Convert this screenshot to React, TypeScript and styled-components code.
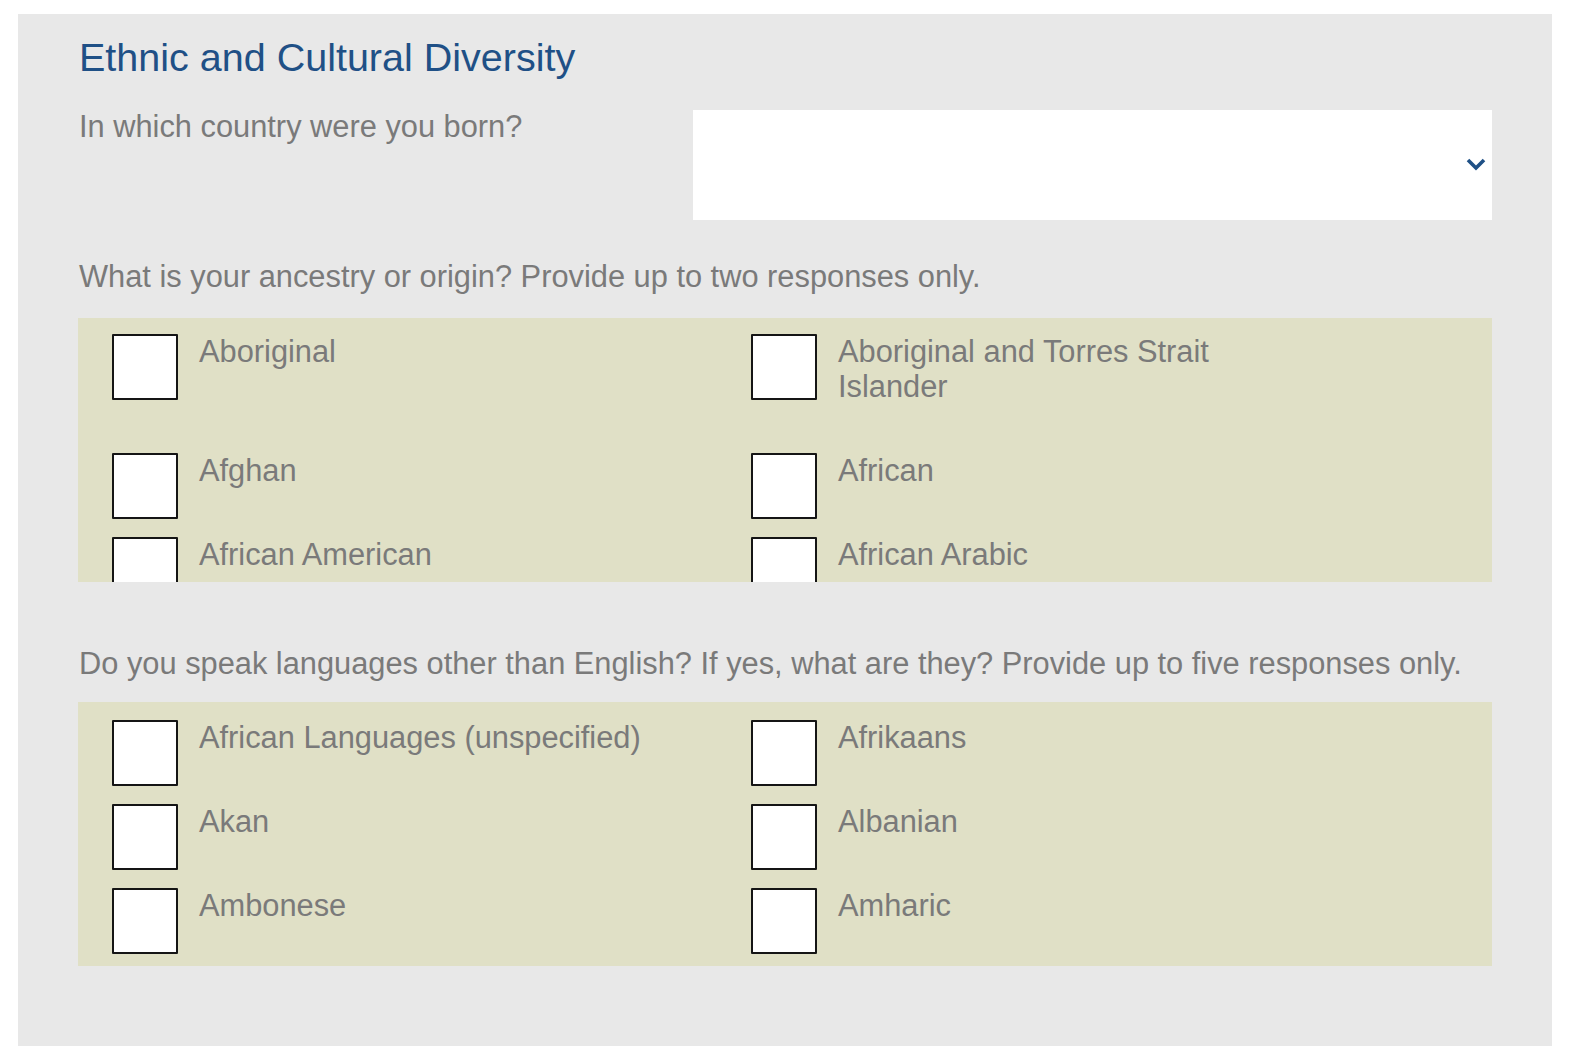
import React from "react";
import styled, { createGlobalStyle } from "styled-components";

const GlobalStyle = createGlobalStyle`
  html, body {
    margin: 0;
    padding: 0;
    background: #ffffff;
  }
  body {
    font-family: "Liberation Sans", Arial, Helvetica, sans-serif;
  }
  * { box-sizing: border-box; }
`;

const Page = styled.div`
  padding: 14px 18px 14px 18px;
`;

const Panel = styled.section`
  background: #e8e8e8;
  padding: 20px 60px 80px 60px;
  color: #7a7a7a;
  font-size: 30.8px;
  line-height: 34px;
`;

const Title = styled.h2`
  margin: 0 0 30px 1px;
  font-size: 39.5px;
  line-height: 46px;
  font-weight: 400;
  color: #1f5086;
`;

const QuestionRow = styled.div`
  display: grid;
  grid-template-columns: 615px 1fr;
  align-items: start;
`;

const Question = styled.p<{ $top: number; $bottom: number }>`
  margin: ${(p) => p.$top}px 0 ${(p) => p.$bottom}px 1px;
  font-size: 30.8px;
  line-height: 34px;
  color: #7a7a7a;
`;

const SelectBox = styled.div`
  height: 110px;
  background: #ffffff;
  display: flex;
  align-items: center;
  justify-content: flex-end;
  padding-right: 6px;
`;

const Chevron = styled.svg`
  width: 20px;
  height: 14px;
  margin-bottom: 2px;
`;

const OptionsBox = styled.div<{ $padTop: number }>`
  height: 264px;
  overflow: hidden;
  background: #e0e0c6;
  padding: ${(p) => p.$padTop}px 34px 0 34px;
  display: grid;
  grid-template-columns: 639px 639px;
  row-gap: 18px;
  align-content: start;
`;

const Option = styled.label`
  display: flex;
  align-items: flex-start;
  gap: 21px;
  cursor: pointer;
`;

const Box = styled.span`
  flex: none;
  width: 66px;
  height: 66px;
  background: #ffffff;
  border: 2px solid #151515;
  border-radius: 1px;
`;

const OptionText = styled.span`
  max-width: 460px;
  padding-bottom: 31px;
  line-height: 35px;
  color: #7a7a7a;
`;

const ancestry = [
  "Aboriginal",
  "Aboriginal and Torres Strait Islander",
  "Afghan",
  "African",
  "African American",
  "African Arabic",
];

const languages = [
  "African Languages (unspecified)",
  "Afrikaans",
  "Akan",
  "Albanian",
  "Ambonese",
  "Amharic",
];

function Options({ items, padTop }: { items: string[]; padTop: number }) {
  return (
    <OptionsBox $padTop={padTop}>
      {items.map((t) => (
        <Option key={t}>
          <Box />
          <OptionText>{t}</OptionText>
        </Option>
      ))}
    </OptionsBox>
  );
}

export default function App() {
  return (
    <>
      <GlobalStyle />
      <Page>
        <Panel>
          <Title>Ethnic and Cultural Diversity</Title>
          <QuestionRow>
            <Question $top={0} $bottom={0}>In which country were you born?</Question>
            <SelectBox>
              <Chevron viewBox="0 0 20 14">
                <polyline
                  points="2,3 10,11 18,3"
                  fill="none"
                  stroke="#1f5086"
                  strokeWidth="3.6"
                  strokeLinecap="butt"
                  strokeLinejoin="miter"
                />
              </Chevron>
            </SelectBox>
          </QuestionRow>
          <Question $top={40} $bottom={24}>
            What is your ancestry or origin? Provide up to two responses only.
          </Question>
          <Options items={ancestry} padTop={16} />
          <Question $top={65} $bottom={21}>
            Do you speak languages other than English? If yes, what are they? Provide up to five responses only.
          </Question>
          <Options items={languages} padTop={18} />
        </Panel>
      </Page>
    </>
  );
}
